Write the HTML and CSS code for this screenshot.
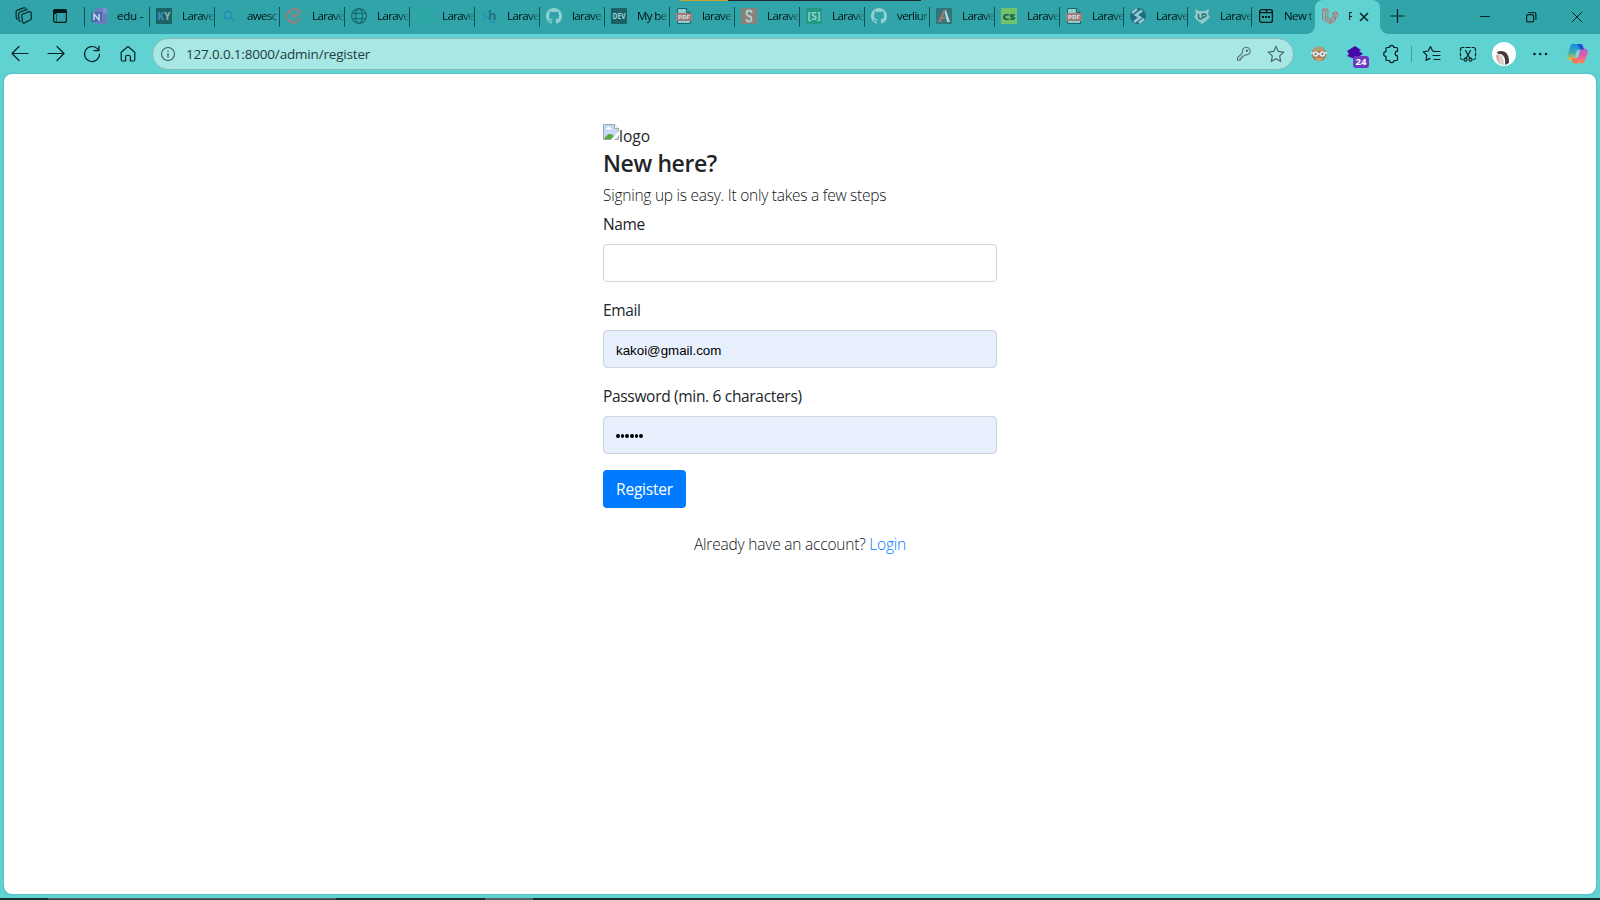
FILE: index.html
```html
<!DOCTYPE html>
<html lang="en">
<head>
<meta charset="utf-8">
<title>Register</title>
<link rel="stylesheet" href="styles.css">
</head>
<body>
<svg class="defs" aria-hidden="true">
  <symbol id="github" viewBox="0 0 16 16"><path d="M8 0C3.58 0 0 3.58 0 8c0 3.54 2.29 6.53 5.47 7.59.4.07.55-.17.55-.38 0-.19-.01-.82-.01-1.49-2.01.37-2.53-.49-2.69-.94-.09-.23-.48-.94-.82-1.13-.28-.15-.68-.52-.01-.53.63-.01 1.08.58 1.23.82.72 1.21 1.87.87 2.33.66.07-.52.28-.87.51-1.07-1.78-.2-3.64-.89-3.64-3.95 0-.87.31-1.59.82-2.15-.08-.2-.36-1.02.08-2.12 0 0 .67-.21 2.2.82a7.4 7.4 0 0 1 4 0c1.53-1.04 2.2-.82 2.2-.82.44 1.1.16 1.92.08 2.12.51.56.82 1.27.82 2.15 0 3.07-1.87 3.75-3.65 3.95.29.25.54.73.54 1.48 0 1.07-.01 1.93-.01 2.2 0 .21.15.46.55.38A8 8 0 0 0 16 8c0-4.42-3.58-8-8-8z" fill="#93d0d2"/></symbol>
  <symbol id="pdf" viewBox="0 0 16 16"><path d="M1.5.5h9l4 4v11h-13z" fill="#8cced0" stroke="#14656a"/><path d="M10.500.5v4h4" fill="#40a4a5" stroke="#14656a"/><rect y="5" width="16" height="8" fill="#9d7f7e"/></symbol>
</svg>
<div class="window">
  <div class="top-edge"></div>
  <header class="tabs">
    <div class="lead">
      <svg width="18" height="18" viewBox="0 0 18 18" class="ln"><path d="M7.300 7.200 14 4.800q1.800-.5 2.100.9l.3 5.200q0 1.300-1 1.900L9.500 16q-1.700.6-2-1L6.800 9q-.1-1.300.5-1.800zM5.200 14.300q-1 0-1.200-1L3.600 7.200q0-1.300 1-1.900l7.600-2.900M2.300 12.200q-.9-.2-1-1.200L1 5.300q0-1.300 1-1.900L8.500.9q1-.3 1.700.2"/></svg>
      <svg width="16" height="16" viewBox="0 0 16 16"><rect x="1.600" y="1.600" width="12.800" height="12.800" rx="2" fill="none" stroke="#02191a" stroke-width="1.200"/><path d="M1 5V3q0-2 2-2h10q2 0 2 2v2zM2 5h2.500v9H2z" fill="#02191a"/><path d="M2.300 6H4v7.500H2.300z" fill="#30a4a8"/></svg>
    </div>
    <div class="tab"><svg viewBox="0 0 16 16"><path d="M4 0h12v16H4z" fill="#667fbf"/><path d="M12 0h4v5h-4z" fill="#8292ca"/><path d="M12 10h4v6h-4z" fill="#7576ba"/><path d="M0 4h11v10H0z" fill="#496bb0"/><path d="M3 12V6l5 6V6" stroke="#c4dce6" stroke-width="1.500" fill="none"/></svg><span>edu -</span></div>
    <div class="tab"><svg viewBox="0 0 16 16"><rect width="16" height="16" fill="#1c6368"/><text x="1.500" y="12" textLength="13" font-size="10" font-weight="700" font-family="Open Sans" fill="#8bb6b5"><tspan fill="#3996ba">K</tspan>Y</text></svg><span>Larave</span></div>
    <div class="tab"><svg viewBox="0 0 16 16"><circle cx="7" cy="7" r="3.800" fill="none" stroke="#258bb9" stroke-width="1.500"/><path d="m10 10 3 3" stroke="#258bb9" stroke-width="1.600"/></svg><span>awesc</span></div>
    <div class="tab"><svg viewBox="0 0 16 16"><g fill="none" stroke="#a37c78" stroke-width="2"><path d="M13.800 10A6.500 6.500 0 1 1 3 3.500Q6 .8 10 1.500q4 1 3.500 3.500-.7 2-5.500 4L5.500 5.500"/></g></svg><span>Larave</span></div>
    <div class="tab"><svg viewBox="0 0 16 16"><g fill="none" stroke="#176c71" stroke-width="1.200"><circle cx="8" cy="8" r="7.400"/><ellipse cx="8" cy="8" rx="3.500" ry="7.400"/><path d="M1.300 5.300h13.400M1.300 10.700h13.400"/></g></svg><span>Larave</span></div>
    <div class="tab"><svg viewBox="0 0 16 16"><g fill="none" stroke="#25ac98" stroke-width="1.400"><path d="M2 8q0-6 6-6h2M14 8q0 6-6 6H6M5 9a3.500 3.500 0 0 1 5-3.500M11 7a3.500 3.500 0 0 1-5 3.500M1 12l3-2M12 6l3-3"/></g></svg><span>Larave</span></div>
    <div class="tab"><svg viewBox="0 0 16 16"><path d="m1 6 5 3-5 3M9 14h5" fill="none" stroke="#2592bb" stroke-width="1.400"/><text x="7" y="11.500" font-size="13" font-weight="700" font-family="Open Sans" fill="#22727e">h</text></svg><span>Larave</span></div>
    <div class="tab"><svg><use href="#github"/></svg><span>larave</span></div>
    <div class="tab"><svg viewBox="0 0 16 16"><rect width="16" height="16" rx="1" fill="#1b6266"/><text x="1.500" y="11" textLength="13" lengthAdjust="spacingAndGlyphs" font-size="8.500" font-weight="700" font-family="Open Sans" fill="#9bd2d2">DEV</text></svg><span>My be</span></div>
    <div class="tab"><svg viewBox="0 0 16 16"><use href="#pdf"/><text x="2" y="11.200" font-size="6" font-weight="700" fill="#d3e4e2" font-family="Open Sans" textLength="12" lengthAdjust="spacingAndGlyphs">PDF</text></svg><span>larave</span></div>
    <div class="tab"><svg viewBox="0 0 16 16"><rect width="16" height="16" fill="#8c807b"/><path d="M10.500 5V4q0-1.500-2.500-1.500T5.500 5t2.500 3 2.500 3T8 13.500 5.500 12v-1" fill="none" stroke="#a8d4d2" stroke-width="1.800"/></svg><span>Larave</span></div>
    <div class="tab"><svg viewBox="0 0 16 16"><rect width="16" height="16" fill="#209a84"/><text x="1.500" y="11.800" textLength="13" lengthAdjust="spacingAndGlyphs" font-size="11" font-weight="700" font-family="Open Sans" fill="#92d2c9">[S]</text></svg><span>Larave</span></div>
    <div class="tab"><svg><use href="#github"/></svg><span>verliur</span></div>
    <div class="tab"><svg viewBox="0 0 16 16"><rect width="16" height="16" fill="#31767a"/><path d="M8 2h2l4 12h-3z" fill="#b1d4d4"/><path d="M7.500 2h2L5 14H2z" fill="#a17878"/><path d="M6 10h3" stroke="#a17878" stroke-width="2"/></svg><span>Larave</span></div>
    <div class="tab"><svg viewBox="0 0 16 16"><rect width="16" height="16" fill="#72c267"/><text x="1.500" y="11.500" textLength="13" lengthAdjust="spacingAndGlyphs" font-size="9" font-weight="800" font-family="Open Sans" fill="#155e61">CS</text></svg><span>Larave</span></div>
    <div class="tab narrow"><svg viewBox="0 0 16 16"><use href="#pdf"/><text x="2" y="11.200" font-size="6" font-weight="700" fill="#d3e4e2" font-family="Open Sans" textLength="12" lengthAdjust="spacingAndGlyphs">PDF</text></svg><span>Larave</span></div>
    <div class="tab narrow"><svg viewBox="0 0 16 16"><circle cx="8" cy="8" r="8" fill="#1e6e85"/><path d="M12 2.500 6 7l4 2.500-6 4.500M7 1 2 5M14 11l-5 4" fill="none" stroke="#96cad1" stroke-width="2.600"/></svg><span>Larave</span></div>
    <div class="tab narrow"><svg viewBox="0 0 16 16"><path d="m1 1 4 2h6l4-2-1 5 2 3-4 4-4 3-4-3-4-4 2-3z" fill="#91c9ca"/><path d="M4.500 6v3q0 2 2 2t2-2V6M8.500 10V6h2q2 .2 1.500 2-.5 1.300-3 1.200" fill="none" stroke="#28767a" stroke-width="1.500"/></svg><span>Larave</span></div>
    <div class="tab narrow"><svg viewBox="0 0 16 16" fill="none" stroke="#02191a" stroke-width="1.300"><rect x="1.600" y="1.600" width="12.800" height="12.800" rx="2.200"/><path d="M2 4.600h12M8.500 1.600v3"/><path d="M4 9h2M7 9h2M10 9h2" stroke-width="2"/></svg><span>New t</span></div>
    <div class="tab active"><svg viewBox="0 0 16 16" fill="none" stroke="#bb6d6a" stroke-width="1"><path d="m.6 1.500 2.700-1 2.600 1v8l2.500 1.500 2.500-1.500V5l2.300-1.400L15.500 5v3.500l-2.300 1.300v2.700l-4.900 3-4.900-2.500L.6 11zM.6 1.500l2.700 1.300 2.600-1.300M3.300 2.800v7.900l2.600-1.300M3.300 10.700l5 2.800 4.900-3M8.400 11v4.500M10.900 5l2.300 1.400L15.500 5M13.200 6.400v3.400L10.900 8.500"/></svg><span>R</span><svg class="x" viewBox="0 0 16 16"><path d="m4 4 8 8m0-8-8 8" stroke="#092122" stroke-width="1.500"/></svg></div>
    <svg class="plus" width="16" height="16" viewBox="0 0 16 16"><path d="M8.500 1v14M1.500 8h14" stroke="#082223" stroke-width="1.200"/></svg>
    <div class="controls">
      <svg viewBox="0 0 16 16" class="ln"><path d="M3.500 7.500h9"/></svg>
      <svg viewBox="0 0 16 16" class="ln"><rect x="3.600" y="5.600" width="7" height="7.300" rx="1.200"/><path d="M5.500 3.500h5.700q1.700 0 1.700 1.700v5.300"/></svg>
      <svg viewBox="0 0 16 16" class="ln"><path d="m3 3 10 10M13 3 3 13" stroke-width="1"/></svg>
    </div>
  </header>
  <nav class="toolbar">
    <div class="cell"><svg viewBox="0 0 20 20" class="ln"><path d="M2.500 9.500H18M9 2.500l-7 7 7 7"/></svg></div>
    <div class="cell"><svg viewBox="0 0 20 20" class="ln"><path d="M2 9.500h15.500M11 2.500l7 7-7 7"/></svg></div>
    <div class="cell"><svg viewBox="0 0 20 20" class="ln"><path d="M17.500 10a7.500 7.500 0 1 1-2.200-5.300L17 6.500M17 2v4.700h-5"/></svg></div>
    <div class="cell"><svg viewBox="0 0 20 20" class="ln"><path d="M10 2.500 3.200 8.300v7.500q0 1.200 1.200 1.200h3.200v-4.500q0-1 1-1h2.800q1 0 1 1V17h3.200q1.200 0 1.200-1.200V8.300z"/></svg></div>
    <div class="address">
      <svg width="16" height="16" viewBox="0 0 16 16" fill="none" stroke="#3f5b5c" stroke-width="1.100"><circle cx="8" cy="8" r="6.500"/><path d="M8 7v4.500M8 4.500v1.300" stroke-width="1.300"/></svg>
      <span class="url">127.0.0.1:8000/admin/register</span>
      <svg width="16" height="16" viewBox="0 0 16 16" fill="none" stroke="#527778" stroke-width="1.100"><path d="M6.600 6.700q-.8-2.900 1.200-4.600Q10.300.3 12.800 2.100q2.400 2.300.9 5-1.600 2.300-4.600 1.700L7.600 10.300H6v1.900H4.300v1.900H1.500v-2.300z"/><circle cx="11" cy="4.700" r=".7"/></svg>
      <svg class="star" width="18" height="18" viewBox="0 0 18 18" fill="none" stroke="#466a6b" stroke-width="1.200"><path d="m9 1.500 2.300 4.900 5.200.7-3.800 3.800.9 5.400L9 13.700l-4.600 2.600.9-5.400L1.500 7.100l5.200-.7z"/></svg>
    </div>
    <div class="cell ext"><svg width="16" height="16" viewBox="0 0 16 16"><circle cx="8" cy="8" r="7.300" fill="#a77e5a"/><path d="M2 5q2-5 6-4.500T14 5z" fill="#b79a72"/><path d="M4 12h8l-2 3H6z" fill="#d9976c"/><g fill="#6f9297" stroke="#eeefed" stroke-width="1.300"><circle cx="4.600" cy="8" r="2"/><circle cx="11.400" cy="8" r="2"/><path d="M0 7h2.500M13.500 7H16M6.500 8h3"/></g></svg></div>
    <div class="cell badge-cell"><svg width="18" height="16" viewBox="0 0 18 16"><path d="m9 0 6 4-2 1 4 3-8 5-8-3 2-2-2-3z" fill="#4807a9"/></svg><b class="badge">24</b></div>
    <div class="cell"><svg viewBox="0 0 20 20" class="ln"><path d="M6 3.500h2.500a2.200 2.200 0 0 1 4.400 0h2.600q1 0 1 1v2.700a1.500 1.500 0 0 0 0 4.600v3.700q0 1-1 1h-2.600a2.200 2.200 0 0 1-4.400 0H6q-1 0-1-1v-3.200a2.200 2.200 0 1 1 0-4.600V4.500q0-1 1-1z"/></svg></div>
    <i class="divider"></i>
    <div class="cell"><svg viewBox="0 0 20 20" class="ln"><path d="m14 7.500-3.400-.5L8.500 2.500 6.200 7l-4.900.8 3.500 3.600-.8 5 4-2M12 7.500h6M11 11.500h7M12 15.500h6"/></svg></div>
    <div class="cell"><svg viewBox="0 0 20 20" class="ln"><path d="M2.500 7V5.500q0-2 2-2H6M8 3.500h4M14 3.500h1.500q2 0 2 2V7M2.500 9v3M2.500 14q.2 1.500 2 1.500M17.500 9v3M17.500 14q-.2 1.500-2 1.500M7.500 6.500l4.500 8M12.500 6.500l-4.500 8"/><circle cx="7.500" cy="15.700" r="1.500"/><circle cx="12.500" cy="15.700" r="1.500"/></svg></div>
    <div class="cell"><svg class="avatar" viewBox="0 0 24 24"><circle cx="12" cy="12" r="12" fill="#fff"/><path d="M5 10q4-2 8 0 4.500 3 4 11l-4 2q1-9-4-11-4 0-4-2z" fill="#46393b"/><path d="M4 13q2-2 5 0 3 3 3 10-4 0-6-2z" fill="#d8cdc8"/><path d="m4 14 2-1 1 7-2-2z" fill="#d4a483"/></svg></div>
    <div class="cell"><svg viewBox="0 0 20 20"><g fill="#0a2727"><circle cx="4.500" cy="10" r="1.300"/><circle cx="10.200" cy="10" r="1.300"/><circle cx="16" cy="10" r="1.300"/></g></svg></div>
    <div class="cell copilot"><svg viewBox="0 0 24 24">
      <defs>
        <linearGradient id="ca" x1="0" y1="0" x2="0" y2="1"><stop offset="0" stop-color="#1589e8"/><stop offset=".5" stop-color="#3aaeb4"/><stop offset="1" stop-color="#e8c72e"/></linearGradient>
        <linearGradient id="cb" x1="0" y1="0" x2="0" y2="1"><stop offset="0" stop-color="#a667df"/><stop offset=".5" stop-color="#e958a2"/><stop offset="1" stop-color="#fb8950"/></linearGradient>
      </defs>
      <path d="M6 1h9q2 0 2.700 2L19 7h-5q-2 0-2.600 2L9 17q-.7 2-2.500 2H4q-4 0-3-5L4 4q.6-3 2-3z" fill="url(#ca)"/>
      <path d="M18 22H9q-2 0-2.700-2L5.500 17H8q2 0 2.600-2L13 8q.7-2 3-2h4q4 0 3 5l-3 8q-.6 3-2 3z" fill="url(#cb)"/>
      <path d="M12 1h3q2 0 2.700 2L19 7h-4z" fill="#204cce"/><path d="M9 22q-2 0-2.700-2L5.500 17H8l4 5z" fill="#f27643"/><path d="m11.500 8-2.200 8h3.200l2.300-8z" fill="#7adbdc"/>
    </svg></div>
  </nav>
  <main class="page">
    <form class="form">
      <div class="brand"><svg width="16" height="16" viewBox="0 0 16 16"><path d="M.5.5h11l4 4v11H.5z" fill="#c5d8f6" stroke="#a3a6aa"/><path d="M11.500.5v4h4" fill="#fff" stroke="#a3a6aa"/><path d="M3 5q0-1.500 1.500-1.500Q5.500 2 7 3.500 8.500 4 8.500 5.500H3z" fill="#fff"/><path d="M1 15q3-5 6-5 2 0 4 2l-3 3z" fill="#56ab37"/><path d="m8 16 8-9v4l-5 5z" fill="#fff"/></svg><span class="t-logo">logo</span></div>
      <h4><span class="t-head">New here?</span></h4>
      <h6><span class="t-sub">Signing up is easy. It only takes a few steps</span></h6>
      <div class="group"><label class="t-name">Name</label><div class="input"></div></div>
      <div class="group"><label class="t-email">Email</label><div class="input filled">kakoi@gmail.com</div></div>
      <div class="group"><label class="t-pass">Password (min. 6 characters)</label><div class="input filled dots"><i></i><i></i><i></i><i></i><i></i><i></i></div></div>
      <button type="button" class="submit"><span>Register</span></button>
      <div class="login"><span>Already have an account? <a>Login</a></span></div>
    </form>
  </main>
  <footer class="taskbar"><i class="search"></i><i class="app"></i></footer>
</div>
</body>
</html>
```

FILE: styles.css
```css
* { box-sizing: border-box; }
body { margin: 0; font-family: "Open Sans", "Noto Sans", sans-serif; color: #212529; overflow: hidden; }
.defs { position: absolute; width: 0; height: 0; }
svg { display: block; flex: none; }
.ln { fill: none; stroke: #082223; stroke-width: 1.200; stroke-linecap: round; stroke-linejoin: round; }
.window { position: relative; width: 1600px; height: 900px; background: #60d2d2; display: flex; flex-direction: column; }
.top-edge { position: absolute; left: 680px; top: 0; width: 241px; height: 1px; background: linear-gradient(90deg, #c9a22c 48px, #1f2a2d 48px); }

/* Tab strip */
.tabs { height: 34px; background: #30a4a8; display: flex; align-items: center; flex: none; }
.lead { width: 84px; display: flex; align-items: center; gap: 19px; padding-left: 15px; padding-bottom: 2px; }
.tab { width: 65px; height: 20px; border-left: 1px solid #0d5458; display: flex; align-items: center; padding-left: 6px; font-size: 11.500px; letter-spacing: -0.600px; color: #020f10; white-space: nowrap; flex: none; }
.tab.narrow { width: 64px; }
.tab svg { width: 16px; height: 16px; margin-bottom: 2px; letter-spacing: 0; }
.tab span { width: 32px; line-height: 18px; margin-left: 10px; margin-bottom: 3px; overflow: hidden; flex: none; -webkit-mask-image: linear-gradient(90deg, #000 65%, rgba(0,0,0,.2)); mask-image: linear-gradient(90deg, #000 65%, rgba(0,0,0,.2)); }
.tab:nth-child(2) span { letter-spacing: -0.200px; -webkit-mask-image: none; mask-image: none; }
.tab.active { position: relative; width: 65px; height: 34px; margin: 0; border: 0; border-radius: 8px 8px 0 0; background: #60d2d2; padding-left: 7px; }
.tab.active::before, .tab.active::after { content: ""; position: absolute; bottom: 0; width: 8px; height: 8px; }
.tab.active::before { left: -8px; background: radial-gradient(circle at 0 0, #30a4a8 7.500px, #60d2d2 8px); }
.tab.active::after { right: -8px; background: radial-gradient(circle at 100% 0, #30a4a8 7.500px, #60d2d2 8px); }
.tab.active span { width: 4px; -webkit-mask-image: none; mask-image: none; }
.tab.active .x { margin-left: 4px; margin-bottom: 1px; }
.plus { margin-left: 9px; margin-bottom: 2px; }
.controls { margin-left: auto; display: flex; gap: 30px; padding-right: 15px; }
.controls svg { width: 16px; height: 16px; }

/* Toolbar */
.toolbar { height: 40px; display: flex; align-items: center; padding-left: 2px; flex: none; }
.cell { width: 36px; height: 36px; display: flex; align-items: center; justify-content: center; flex: none; position: relative; }
.cell svg { width: 20px; height: 20px; }
.cell .avatar { width: 24px; height: 24px; }
.copilot { margin-left: 1px; }
.cell.copilot svg { width: 23px; height: 22px; }
.ext { margin-left: 7px; }
.cell.ext svg { width: 16px; height: 16px; }
.cell.badge-cell svg { width: 18px; height: 16px; }
.badge { position: absolute; left: 16px; top: 20px; width: 16px; height: 12px; border-radius: 3px; background: #6c39bf; color: #fff; font-size: 9.500px; line-height: 12px; text-align: center; }
.divider { width: 1px; height: 16px; background: #36a0a3; margin: 0 2px; flex: none; }
.address { width: 1142px; height: 32px; margin-left: 6px; margin-bottom: 1px; border: 1px solid #87b9b5; border-radius: 16px; background: #a7e7e4; display: flex; align-items: center; padding: 0 8px 0 7px; flex: none; }
.url { flex: 1; margin-left: 10px; font-size: 13.500px; line-height: 20px; letter-spacing: -0.180px; color: #1f3d3e; }
.star { margin-left: 15px; }

/* Page */
.page { width: 1592px; height: 820px; margin: 0 4px; background: #fff; border-radius: 8px; box-shadow: 0 0 2px #3b9b9c; padding-top: 50px; flex: none; }
.form { width: 394px; margin: 0 auto; font-size: 15.500px; line-height: 24px; }
.brand { display: flex; height: 24px; }
h4 { margin: 0 0 8px; font-size: 24px; line-height: 29px; font-weight: 600; white-space: nowrap; }
h6 { margin: 0 0 7px; font-size: 15.500px; line-height: 19px; font-weight: 300; white-space: nowrap; color: #111519; }
.t-head { font-size: 23px; letter-spacing: -0.400px; }
.t-sub { letter-spacing: -0.250px; }
.t-name { letter-spacing: -0.400px; }
.t-email { letter-spacing: -0.400px; }
.t-pass { letter-spacing: -0.320px; }
.group { margin-bottom: 16px; }
label { display: block; margin-bottom: 8px; }
.input { height: 38px; border: 1px solid #ced4da; border-radius: 4px; padding: 2px 12px 0; font: 13.333px/36px "Liberation Sans", Arial, sans-serif; color: #000; }
.filled { background: #e8f0fe; }
.dots { display: flex; align-items: center; gap: 1px; padding-left: 12px; }
.dots i { width: 3.700px; height: 4px; border-radius: 50%; background: #000; }
.submit { display: block; width: 83px; height: 38px; border: 0; border-radius: 4px; padding: 0; background: #007bff; color: #fff; font: 15.500px/24px "Open Sans", sans-serif; letter-spacing: -0.200px; }
.login { margin-top: 24px; text-align: center; font-weight: 300; letter-spacing: -0.200px; white-space: nowrap; color: #111519; }
.login a { color: #007bff; }
.taskbar { margin-top: 4px; height: 2px; background: #17302f; display: flex; flex: none; }
.search { width: 288px; margin-left: 48px; background: #3b4342; border-top: 1px solid #59605f; }
.app { width: 48px; margin-left: 149px; background: #52605f; }
```
